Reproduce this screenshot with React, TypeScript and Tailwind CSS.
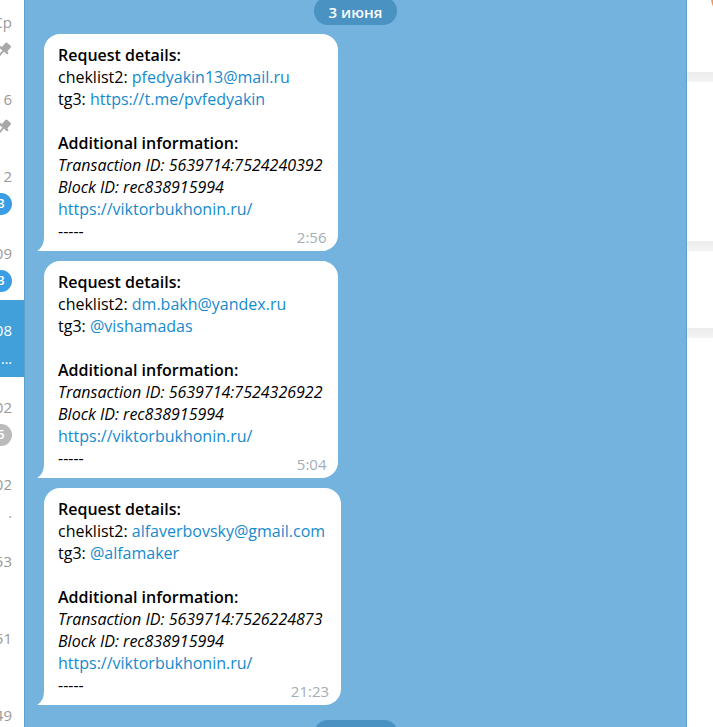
import React from "react";

const font = { fontFamily: '"Open Sans", "Noto Sans", sans-serif' };

function Pin() {
  return (
    <svg width="16" height="16" viewBox="0 0 16 16" className="shrink-0">
      <g transform="rotate(40 8 8)">
        <rect x="4.5" y="0.5" width="7" height="7.5" rx="1.2" fill="#a8a8a8" />
        <rect x="2.5" y="7" width="11" height="2.4" rx="1.2" fill="#a8a8a8" />
        <rect x="7.1" y="9" width="1.8" height="6.5" fill="#a8a8a8" />
      </g>
    </svg>
  );
}

type Row = { time: string; second?: React.ReactNode; selected?: boolean };

const blueBadge = (n: string) => (
  <span className="flex h-[22px] min-w-[22px] items-center justify-center rounded-full bg-[#3a9ee4] text-[13px] font-semibold text-white">
    {n}
  </span>
);

const rows: Row[] = [
  { time: "Ср", second: <Pin /> },
  { time: "6", second: <Pin /> },
  { time: "2", second: blueBadge("3") },
  { time: "10:09", second: blueBadge("3") },
  { time: "19:08", second: <span className="text-[14px] text-white">...</span>, selected: true },
  {
    time: "18:02",
    second: (
      <span className="flex h-[22px] min-w-[22px] items-center justify-center rounded-full bg-[#bbbbbb] text-[13px] font-semibold text-white">
        5
      </span>
    ),
  },
  { time: "18:02", second: <span className="text-[14px] text-[#999]">.</span> },
  { time: "17:53" },
  { time: "16:51" },
  { time: "15:49" },
];

function Sidebar() {
  return (
    <div className="w-[25px] shrink-0 overflow-hidden bg-white border-r border-[#5d9fcd]">
      <div className="-mt-[8px] flex flex-col">
        {rows.map((r, i) => (
          <div
            key={i}
            className={`flex h-[77px] flex-col items-end overflow-hidden pr-[12px] ${r.selected ? "bg-[#419fd9]" : ""}`}
          >
            <div
              className={`mt-[20px] flex h-[20px] items-center whitespace-nowrap text-[15px] leading-[20px] ${r.selected ? "text-white" : "text-[#999999]"}`}
            >
              {r.time}
            </div>
            <div className="mt-[8px] flex h-[20px] items-center whitespace-nowrap">{r.second}</div>
          </div>
        ))}
      </div>
    </div>
  );
}

type Msg = {
  email: string;
  tg: string;
  tx: string;
  time: string;
};

const msgs: Msg[] = [
  { email: "pfedyakin13@mail.ru", tg: "https://t.me/pvfedyakin", tx: "5639714:7524240392", time: "2:56" },
  { email: "dm.bakh@yandex.ru", tg: "@vishamadas", tx: "5639714:7524326922", time: "5:04" },
  { email: "alfaverbovsky@gmail.com", tg: "@alfamaker", tx: "5639714:7526224873", time: "21:23" },
];

function Tail() {
  return (
    <svg width="10" height="14" viewBox="0 0 10 14" className="absolute bottom-0 left-[-7px]">
      <path d="M7 0 C7 6 5 11 0 14 L10 14 L10 0 Z" fill="#ffffff" />
    </svg>
  );
}

function Bubble({ m }: { m: Msg }) {
  return (
    <div className="relative ml-[19px] self-start rounded-[16px] rounded-bl-none bg-white pl-[14px] pr-[16px] pt-[10px] pb-[9px] text-[16px] leading-[22px] text-black">
      <Tail />
      <div className="font-semibold">Request details:</div>
      <div>
        cheklist2: <span className="text-[#168acd]">{m.email}</span>
      </div>
      <div>
        tg3: <span className="text-[#168acd]">{m.tg}</span>
      </div>
      <div>&nbsp;</div>
      <div className="font-semibold">Additional information:</div>
      <div className="italic">Transaction ID: {m.tx}</div>
      <div className="italic">Block ID: rec838915994</div>
      <div className="text-[#168acd]">https://viktorbukhonin.ru/</div>
      <div>-----</div>
      <div className="absolute bottom-[4px] right-[12px] text-[15px] leading-[20px] text-[#a3adb6]">{m.time}</div>
    </div>
  );
}

function Chat() {
  return (
    <div className="flex-1 overflow-hidden bg-[#73b3de]">
      <div className="-mt-[3px] flex flex-col">
        <div className="self-center flex h-[28px] items-center rounded-full bg-[#4a92c2] px-[15px] pt-[3px] text-[15px] font-semibold text-white">
          3 июня
        </div>
        <div className="mt-[9px] flex flex-col gap-[10px]">
          {msgs.map((m, i) => (
            <Bubble key={i} m={m} />
          ))}
        </div>
        <div className="mt-[15px] self-center h-[28px] w-[84px] rounded-full bg-[#4a92c2]" />
      </div>
    </div>
  );
}

function RightPanel() {
  return (
    <div className="relative w-[27px] shrink-0 overflow-hidden bg-white border-l border-[#5d9fcd]">
      <div className="absolute left-[24px] top-[-20px] h-[36px] w-[36px] rounded-full bg-[#f2955a]" />
      <div className="mt-[72px] h-[10px] bg-gradient-to-b from-[#ececec] to-[#f4f4f4]" />
      <div className="mt-[159px] h-[10px] bg-gradient-to-b from-[#ececec] to-[#f4f4f4]" />
      <div className="mt-[77px] h-[10px] bg-gradient-to-b from-[#ececec] to-[#f4f4f4]" />
    </div>
  );
}

export default function App() {
  return (
    <div className="flex h-[727px] w-[713px] overflow-hidden" style={font}>
      <Sidebar />
      <Chat />
      <RightPanel />
    </div>
  );
}
